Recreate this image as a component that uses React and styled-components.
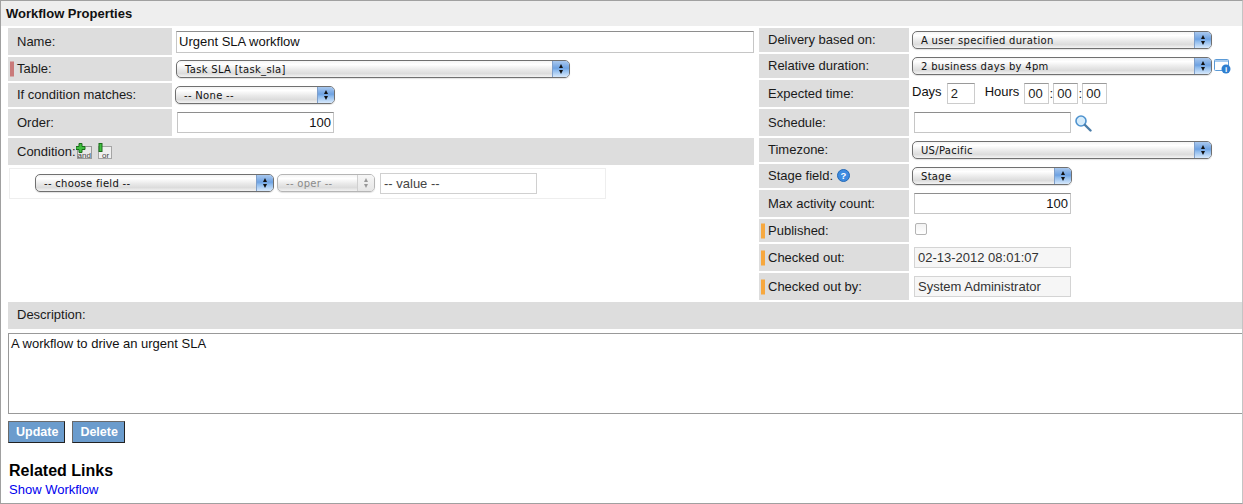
import React from "react";
import styled, { createGlobalStyle } from "styled-components";

const GlobalStyle = createGlobalStyle`
  html, body { margin: 0; padding: 0; background: #fff; overflow: hidden; }
  body { font-family: "Liberation Sans", Arial, sans-serif; font-size: 13px; color: #111; }
`;

const Page = styled.div`
  box-sizing: border-box;
  width: 1243px;
  height: 504px;
  border: 1px solid #a0a0a0;
  border-right-color: #c4c4c4;
  border-bottom-color: #a0a0a0;
  overflow: hidden;
`;

const Header = styled.div`
  height: 25px;
  padding-left: 5px;
  background: #eeeeee;
  font-size: 13px;
  font-weight: bold;
  line-height: 26px;
  color: #111;
`;

const Columns = styled.div`
  display: flex;
  padding: 2px 0 0 7px;
`;

const LeftColumn = styled.div`
  width: 746px;
  display: flex;
  flex-direction: column;
  gap: 2px;
`;

const RightColumn = styled.div`
  margin-left: 5px;
  display: flex;
  flex-direction: column;
  gap: 2px;
`;

const Row = styled.div`
  display: flex;
  height: ${(p) => p.$h}px;
`;

const Label = styled.div`
  position: relative;
  flex: none;
  box-sizing: border-box;
  width: ${(p) => p.$w}px;
  padding-left: ${(p) => p.$pad || 9}px;
  padding-bottom: 1px;
  background: #dddddd;
  display: flex;
  align-items: center;
  font-size: 13px;
  color: #1a1a1a;
`;

const Marker = styled.span`
  position: absolute;
  left: 2px;
  top: 50%;
  width: 4px;
  height: 15px;
  transform: translateY(-50%);
  background: ${(p) => p.$color};
`;

const Field = styled.div`
  flex: 1;
  display: flex;
  align-items: center;
  padding-left: ${(p) => p.$pad || 0}px;
  min-width: 0;
`;

const TextInput = styled.div`
  box-sizing: border-box;
  width: ${(p) => p.$w}px;
  height: ${(p) => p.$h || 21}px;
  border: 1px solid #c6c6c6;
  border-top-color: #8e8e8e;
  background: #fff;
  padding: 0 2px;
  font-size: 13px;
  line-height: ${(p) => (p.$h || 21) - 2}px;
  text-align: ${(p) => (p.$right ? "right" : "left")};
  color: #111;
  white-space: nowrap;
  overflow: hidden;
`;

const ReadonlyInput = styled(TextInput)`
  border-color: #d4d4d4;
  background: #f6f6f6;
  padding: 0 3px;
  color: #333;
`;

const Select = styled.div`
  box-sizing: border-box;
  position: relative;
  flex: none;
  width: ${(p) => p.$w}px;
  height: 18px;
  margin-left: ${(p) => p.$ml || 0}px;
  border: 1px solid ${(p) => (p.$disabled ? "#b5b5b5" : "#707070")};
  border-radius: 5px;
  background: linear-gradient(#f4f4f4 0%, #ffffff 22%, #e9e9e9 55%, #dcdcdc 78%, #f3f3f3 100%);
  box-shadow: 0 1px 1px rgba(0, 0, 0, 0.12);
  padding-left: 8px;
  font-family: "DejaVu Sans", Verdana, sans-serif;
  font-size: 10px;
  line-height: 17px;
  letter-spacing: 0.3px;
  color: ${(p) => (p.$disabled ? "#8a8a8a" : "#111")};
  white-space: nowrap;
  overflow: hidden;
`;

const Stepper = styled.span`
  position: absolute;
  top: 0;
  right: 0;
  bottom: 0;
  width: 16px;
  border-left: 1px solid ${(p) => (p.$disabled ? "#d0d0d0" : "#7f9fca")};
  background: ${(p) =>
    p.$disabled
      ? "linear-gradient(#f6f6f6, #e6e6e6)"
      : "linear-gradient(#a9c8ee 0%, #6ea2e2 45%, #8fbcee 60%, #d8e9fb 100%)"};
  display: flex;
  flex-direction: column;
  align-items: center;
  justify-content: center;
  gap: 2px;

  &::before,
  &::after {
    content: "";
    width: 0;
    height: 0;
    border-left: 2.500px solid transparent;
    border-right: 2.500px solid transparent;
  }
  &::before { border-bottom: 4px solid ${(p) => (p.$disabled ? "#999" : "#111")}; }
  &::after { border-top: 4px solid ${(p) => (p.$disabled ? "#999" : "#111")}; }
`;

const DropDown = ({ w, ml, disabled, children }) => (
  <Select $w={w} $ml={ml} $disabled={disabled}>
    {children}
    <Stepper $disabled={disabled} />
  </Select>
);

const ConditionIcon = styled.svg`
  display: block;
  flex: none;
  width: 16px;
  height: 16px;
  margin-right: ${(p) => p.$mr || 0}px;
`;

const ConditionBox = styled.div`
  box-sizing: border-box;
  width: 597px;
  height: 31px;
  margin: 1px 0 0 1px;
  border: 1px solid #eeeeee;
  display: flex;
  align-items: center;
  padding: 0 0 1px 25px;
`;

const ValueInput = styled.div`
  box-sizing: border-box;
  width: 157px;
  height: 21px;
  margin-left: 5px;
  border: 1px solid #d0d0d0;
  padding-left: 3px;
  font-size: 13px;
  line-height: 19px;
  color: #444;
`;

const TimeText = styled.span`
  font-size: 13px;
  color: #111;
  margin: ${(p) => p.$m || "0"};
  position: relative;
  top: -2px;
`;

const TimeColon = styled.span`
  width: 4px;
  font-size: 13px;
  text-align: center;
  color: #111;
`;

const TimeBox = styled.div`
  box-sizing: border-box;
  width: ${(p) => p.$w}px;
  height: 21px;
  border: 1px solid #cccccc;
  border-top-color: #9a9a9a;
  padding-left: 3px;
  font-size: 13px;
  line-height: 20px;
  color: #222;
  background: #fff;
`;

const DescriptionBar = styled.div`
  box-sizing: border-box;
  height: 27px;
  margin: 2px 0 0 7px;
  padding: 0 0 2px 9px;
  background: #dddddd;
  display: flex;
  align-items: center;
  font-size: 13px;
  color: #1a1a1a;
`;

const TextArea = styled.div`
  box-sizing: border-box;
  height: 81px;
  margin: 4px 0 0 7px;
  border: 1px solid #999999;
  border-right: none;
  padding: 2px;
  font-size: 13px;
  line-height: 15px;
  color: #111;
`;

const ButtonRow = styled.div`
  display: flex;
  gap: 7px;
  margin: 7px 0 0 7px;
`;

const Button = styled.div`
  box-sizing: border-box;
  height: 22px;
  padding: 0 6px 0 7px;
  background: #6b9ccd;
  border: 1px solid;
  border-color: #6a6a6a #222 #222 #6a6a6a;
  color: #fff;
  font-size: 12.500px;
  font-weight: bold;
  line-height: 20px;
`;

const RelatedTitle = styled.div`
  margin: 19px 0 0 8px;
  font-size: 16px;
  font-weight: bold;
  line-height: 17px;
  color: #000;
`;

const ShowLink = styled.a`
  display: block;
  margin: 4px 0 0 8px;
  font-size: 13px;
  line-height: 14px;
  color: #0000ee;
  text-decoration: none;
`;

const AndIcon = () => (
  <ConditionIcon viewBox="0 0 16 16" $mr={5}>
    <rect x="1.500" y="3.500" width="14" height="12" fill="#e8e8e8" stroke="#9a9a9a" />
    <path d="M3 0.500h3v3h3v3H6v3H3V6.500H0v-3h3z" fill="#3fbf3f" stroke="#1c6a1c" />
    <text x="1.500" y="15" fontFamily="Liberation Sans" fontSize="8" fill="#444">and</text>
  </ConditionIcon>
);

const OrIcon = () => (
  <ConditionIcon viewBox="0 0 16 16">
    <rect x="1.500" y="3.500" width="13" height="12" fill="#efefef" stroke="#a5a5a5" />
    <rect x="2" y="0.500" width="3" height="8" fill="#3fbf3f" stroke="#1c6a1c" />
    <text x="5" y="15" fontFamily="Liberation Sans" fontSize="8" fill="#444">or</text>
  </ConditionIcon>
);

const DurationIcon = styled.svg`
  flex: none;
  width: 17px;
  height: 16px;
  margin-left: 2px;
`;

const LookupIcon = styled.svg`
  flex: none;
  width: 18px;
  height: 18px;
  margin-left: 3px;
`;

const HelpIcon = styled.svg`
  width: 13px;
  height: 13px;
  margin-left: 4px;
`;

const Checkbox = styled.div`
  box-sizing: border-box;
  width: 12px;
  height: 12px;
  margin: -3px 0 0 0;
  border: 1px solid #b4b4b4;
  border-radius: 2px;
  background: linear-gradient(#f2f2f2, #ffffff);
`;

const RW = 150;

const RightRow = ({ h, label, marker, pad, children }) => (
  <Row $h={h}>
    <Label $w={RW}>
      {marker && <Marker $color="#f7a83e" />}
      {label}
    </Label>
    <Field $pad={pad}>{children}</Field>
  </Row>
);

export default function App() {
  return (
    <>
      <GlobalStyle />
      <Page>
        <Header>Workflow Properties</Header>
        <Columns>
          <LeftColumn>
            <Row $h={27}>
              <Label $w={164}>Name:</Label>
              <Field $pad={4}>
                <TextInput $w={578} $h={22}>Urgent SLA workflow</TextInput>
              </Field>
            </Row>
            <Row $h={24}>
              <Label $w={164}>
                <Marker $color="#c97a7a" />
                Table:
              </Label>
              <Field $pad={4}>
                <DropDown w={394}>Task SLA [task_sla]</DropDown>
              </Field>
            </Row>
            <Row $h={24}>
              <Label $w={164}>If condition matches:</Label>
              <Field $pad={3}>
                <DropDown w={160}>-- None --</DropDown>
              </Field>
            </Row>
            <Row $h={27}>
              <Label $w={164}>Order:</Label>
              <Field $pad={5}>
                <TextInput $w={157} $right>100</TextInput>
              </Field>
            </Row>
            <Row $h={27}>
              <Label $w={746}>
                Condition:
                <AndIcon />
                <OrIcon />
              </Label>
            </Row>
            <ConditionBox>
              <DropDown w={239}>-- choose field --</DropDown>
              <DropDown w={98} ml={3} disabled>-- oper --</DropDown>
              <ValueInput>-- value --</ValueInput>
            </ConditionBox>
          </LeftColumn>

          <RightColumn>
            <RightRow h={24} label="Delivery based on:" pad={3}>
              <DropDown w={300}>A user specified duration</DropDown>
            </RightRow>
            <RightRow h={24} label="Relative duration:" pad={3}>
              <DropDown w={300}>2 business days by 4pm</DropDown>
              <DurationIcon viewBox="0 0 17 16">
                <rect x="0.500" y="1.500" width="14" height="11" rx="1" fill="#fff" stroke="#5b9ad6" />
                <rect x="1" y="2" width="13" height="2" fill="#a9cdf0" />
                <circle cx="12" cy="11" r="4.500" fill="#2f7fd0" />
                <text x="12" y="14" textAnchor="middle" fontFamily="Liberation Sans" fontWeight="bold" fontSize="8" fill="#fff">i</text>
              </DurationIcon>
            </RightRow>
            <RightRow h={27} label="Expected time:" pad={3}>
              <TimeText $m="0 5px 0 0">Days</TimeText>
              <TimeBox $w={28}>2</TimeBox>
              <TimeText $m="0 5px 0 10px">Hours</TimeText>
              <TimeBox $w={25}>00</TimeBox>
              <TimeColon>:</TimeColon>
              <TimeBox $w={25}>00</TimeBox>
              <TimeColon>:</TimeColon>
              <TimeBox $w={25}>00</TimeBox>
            </RightRow>
            <RightRow h={27} label="Schedule:" pad={5}>
              <TextInput $w={157} />
              <LookupIcon viewBox="0 0 18 18">
                <circle cx="7" cy="7" r="5" fill="#d6ecfb" stroke="#4f93cf" strokeWidth="1.600" />
                <path d="M11 11l5.500 5.500" stroke="#4a7da8" strokeWidth="2.400" strokeLinecap="round" />
              </LookupIcon>
            </RightRow>
            <RightRow h={24} label="Timezone:" pad={3}>
              <DropDown w={300}>US/Pacific</DropDown>
            </RightRow>
            <RightRow
              h={24}
              pad={3}
              label={
                <>
                  Stage field:
                  <HelpIcon viewBox="0 0 13 13">
                    <circle cx="6.500" cy="6.500" r="6" fill="#3d8be0" stroke="#2569b5" />
                    <text x="6.500" y="10" textAnchor="middle" fontFamily="Liberation Sans" fontWeight="bold" fontSize="9.500" fill="#fff">?</text>
                  </HelpIcon>
                </>
              }
            >
              <DropDown w={160}>Stage</DropDown>
            </RightRow>
            <RightRow h={27} label="Max activity count:" pad={5}>
              <TextInput $w={157} $right>100</TextInput>
            </RightRow>
            <RightRow h={23} label="Published:" marker pad={6}>
              <Checkbox />
            </RightRow>
            <RightRow h={27} label="Checked out:" marker pad={5}>
              <ReadonlyInput $w={157}>02-13-2012 08:01:07</ReadonlyInput>
            </RightRow>
            <RightRow h={27} label="Checked out by:" marker pad={5}>
              <ReadonlyInput $w={157}>System Administrator</ReadonlyInput>
            </RightRow>
          </RightColumn>
        </Columns>
        <DescriptionBar>Description:</DescriptionBar>
        <TextArea>A workflow to drive an urgent SLA</TextArea>
        <ButtonRow>
          <Button>Update</Button>
          <Button>Delete</Button>
        </ButtonRow>
        <RelatedTitle>Related Links</RelatedTitle>
        <ShowLink href="#">Show Workflow</ShowLink>
      </Page>
    </>
  );
}
